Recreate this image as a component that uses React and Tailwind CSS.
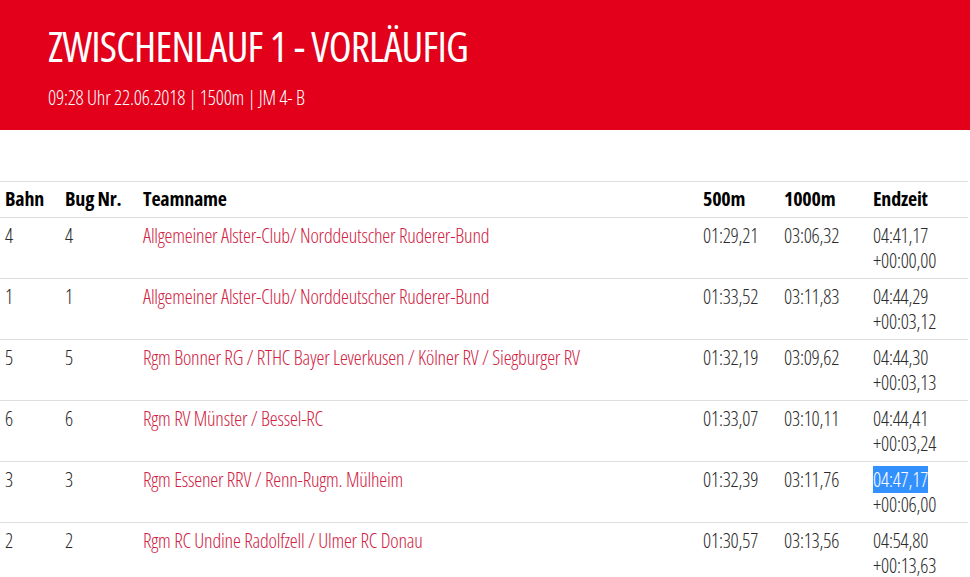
const rows = [
  { bahn: "4", bug: "4", team: "Allgemeiner Alster-Club/ Norddeutscher Ruderer-Bund", t500: "01:29,21", t1000: "03:06,32", end: "04:41,17", diff: "+00:00,00" },
  { bahn: "1", bug: "1", team: "Allgemeiner Alster-Club/ Norddeutscher Ruderer-Bund", t500: "01:33,52", t1000: "03:11,83", end: "04:44,29", diff: "+00:03,12" },
  { bahn: "5", bug: "5", team: "Rgm Bonner RG / RTHC Bayer Leverkusen / Kölner RV / Siegburger RV", t500: "01:32,19", t1000: "03:09,62", end: "04:44,30", diff: "+00:03,13" },
  { bahn: "6", bug: "6", team: "Rgm RV Münster / Bessel-RC", t500: "01:33,07", t1000: "03:10,11", end: "04:44,41", diff: "+00:03,24" },
  { bahn: "3", bug: "3", team: "Rgm Essener RRV / Renn-Rugm. Mülheim", t500: "01:32,39", t1000: "03:11,76", end: "04:47,17", diff: "+00:06,00", selected: true },
  { bahn: "2", bug: "2", team: "Rgm RC Undine Radolfzell / Ulmer RC Donau", t500: "01:30,57", t1000: "03:13,56", end: "04:54,80", diff: "+00:13,63" },
];

const cols = "grid grid-cols-[60px_78px_560px_81px_89px_100px]";

export default function App() {
  return (
    <div className="min-h-screen bg-white font-['Open_Sans',sans-serif] [font-stretch:75%]">
      {/* header */}
      <header className="h-[130px] bg-[#e2001a] px-[48px] pt-[20px] text-white">
        <h1 className="text-[42px] leading-[52px] font-medium tracking-[-0.8px]">ZWISCHENLAUF 1 - VORLÄUFIG</h1>
        <div className="mt-[13px] text-[20px] leading-[25px] font-light tracking-[-0.2px]">09:28 Uhr 22.06.2018 | 1500m | JM 4- B</div>
      </header>

      {/* results table */}
      <div className="mt-[51px] w-[968px] border-t border-[#dddddd] text-[20px] leading-[25px] tracking-[-0.2px]">
        <div className={`${cols} pt-[4px] pb-[6px] font-bold text-black`}>
          <div className="px-[5px]">Bahn</div>
          <div className="px-[5px]">Bug Nr.</div>
          <div className="px-[5px]">Teamname</div>
          <div className="px-[5px]">500m</div>
          <div className="px-[5px]">1000m</div>
          <div className="px-[5px]">Endzeit</div>
        </div>
        {rows.map((r, i) => (
          <div key={i} className={`${cols} border-t border-[#dddddd] pt-[5px] pb-[5px] font-light text-[#2b2b2b]`}>
            <div className="px-[5px]">{r.bahn}</div>
            <div className="px-[5px]">{r.bug}</div>
            <div className="px-[5px] text-[#d0213f]">{r.team}</div>
            <div className="px-[5px]">{r.t500}</div>
            <div className="px-[5px]">{r.t1000}</div>
            <div className="px-[5px]">
              <div>{r.selected ? <span className="bg-[#3390ff] text-white">{r.end}</span> : r.end}</div>
              <div>{r.diff}</div>
            </div>
          </div>
        ))}
      </div>
    </div>
  );
}
